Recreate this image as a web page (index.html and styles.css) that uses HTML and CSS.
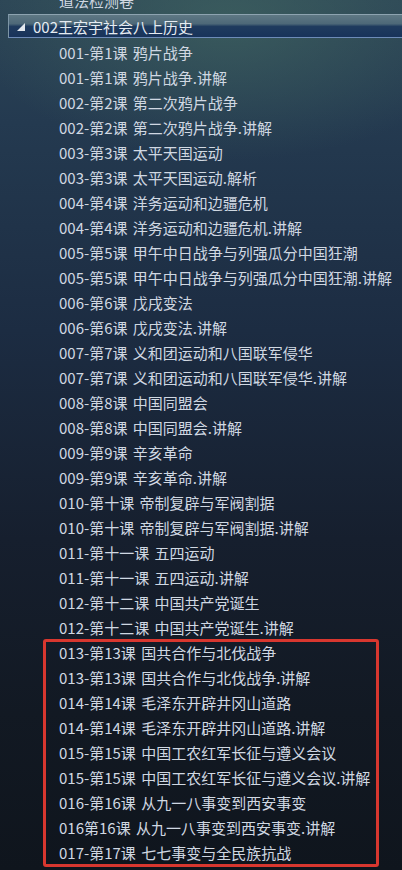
FILE: index.html
```html
<!DOCTYPE html>
<html lang="zh">
<head>
<meta charset="utf-8">
<title>002王宏宇社会八上历史</title>
<link rel="stylesheet" href="styles.css">
</head>
<body>
<div class="tree">
  <div class="row item cut">道法检测卷</div>
  <div class="row group">
    <svg class="tri" width="8" height="8" viewBox="0 0 8 8"><polygon points="8,0 8,8 0,8" fill="#e2e8ee"/></svg>
    <span class="label">002王宏宇社会八上历史</span>
  </div>
  <div class="items">
    <div class="row item">001-第1课 鸦片战争</div>
    <div class="row item">001-第1课 鸦片战争.讲解</div>
    <div class="row item">002-第2课 第二次鸦片战争</div>
    <div class="row item">002-第2课 第二次鸦片战争.讲解</div>
    <div class="row item">003-第3课 太平天国运动</div>
    <div class="row item">003-第3课 太平天国运动.解析</div>
    <div class="row item">004-第4课 洋务运动和边疆危机</div>
    <div class="row item">004-第4课 洋务运动和边疆危机.讲解</div>
    <div class="row item">005-第5课 甲午中日战争与列强瓜分中国狂潮</div>
    <div class="row item">005-第5课 甲午中日战争与列强瓜分中国狂潮.讲解</div>
    <div class="row item">006-第6课 戊戌变法</div>
    <div class="row item">006-第6课 戊戌变法.讲解</div>
    <div class="row item">007-第7课 义和团运动和八国联军侵华</div>
    <div class="row item">007-第7课 义和团运动和八国联军侵华.讲解</div>
    <div class="row item">008-第8课 中国同盟会</div>
    <div class="row item">008-第8课 中国同盟会.讲解</div>
    <div class="row item">009-第9课 辛亥革命</div>
    <div class="row item">009-第9课 辛亥革命.讲解</div>
    <div class="row item">010-第十课 帝制复辟与军阀割据</div>
    <div class="row item">010-第十课 帝制复辟与军阀割据.讲解</div>
    <div class="row item">011-第十一课 五四运动</div>
    <div class="row item">011-第十一课 五四运动.讲解</div>
    <div class="row item">012-第十二课 中国共产党诞生</div>
    <div class="row item">012-第十二课 中国共产党诞生.讲解</div>
    <div class="row item">013-第13课 国共合作与北伐战争</div>
    <div class="row item">013-第13课 国共合作与北伐战争.讲解</div>
    <div class="row item">014-第14课 毛泽东开辟井冈山道路</div>
    <div class="row item">014-第14课 毛泽东开辟井冈山道路.讲解</div>
    <div class="row item">015-第15课 中国工农红军长征与遵义会议</div>
    <div class="row item">015-第15课 中国工农红军长征与遵义会议.讲解</div>
    <div class="row item">016-第16课 从九一八事变到西安事变</div>
    <div class="row item">016第16课 从九一八事变到西安事变.讲解</div>
    <div class="row item">017-第17课 七七事变与全民族抗战</div>
  </div>
  <div class="mark"></div>
</div>
</body>
</html>
```

FILE: styles.css
```css
html, body {
  margin: 0;
  padding: 0;
}
body {
  width: 402px;
  height: 870px;
  overflow: hidden;
  font-family: "Noto Sans CJK SC", "Noto Sans", sans-serif;
  font-size: 15px;
  color: #d0d8e2;
  background:
    radial-gradient(ellipse 260px 140px at 230px 20px, rgba(70, 110, 100, 0.55), rgba(70, 110, 100, 0) 100%),
    linear-gradient(180deg, #2c4556 0%, #243a50 14%, #1c2c42 38%, #161f2e 62%, #121923 82%, #0f151d 100%);
}
.tree {
  position: relative;
  margin-top: -10px;
}
.row {
  height: 25px;
  line-height: 25px;
  white-space: nowrap;
  word-spacing: 2px;
}
.item {
  padding-left: 59px;
}
.cut {
  height: 24px;
  line-height: 22px;
}
.group {
  height: 24px;
  line-height: 26px;
  margin-left: 8px;
  margin-bottom: 2px;
  display: flex;
  align-items: center;
  color: #e6ecf2;
  border-top: 1px solid #8da3b0;
  border-bottom: 1px solid #6d8bb8;
  border-left: 1px solid #7d95a6;
  box-sizing: border-box;
  background: linear-gradient(180deg, #5f7884 0%, #4d6878 40%, #1f3b5e 52%, #18335a 100%);
}
.tri {
  margin-left: 8px;
  margin-right: 8px;
  margin-top: 2px;
  flex: none;
}
.label {
  padding-top: 1px;
}
.mark {
  position: absolute;
  left: 43px;
  top: 649px;
  width: 336px;
  height: 228px;
  box-sizing: border-box;
  border: 3.5px solid #d8372f;
  border-radius: 3px;
}
```
